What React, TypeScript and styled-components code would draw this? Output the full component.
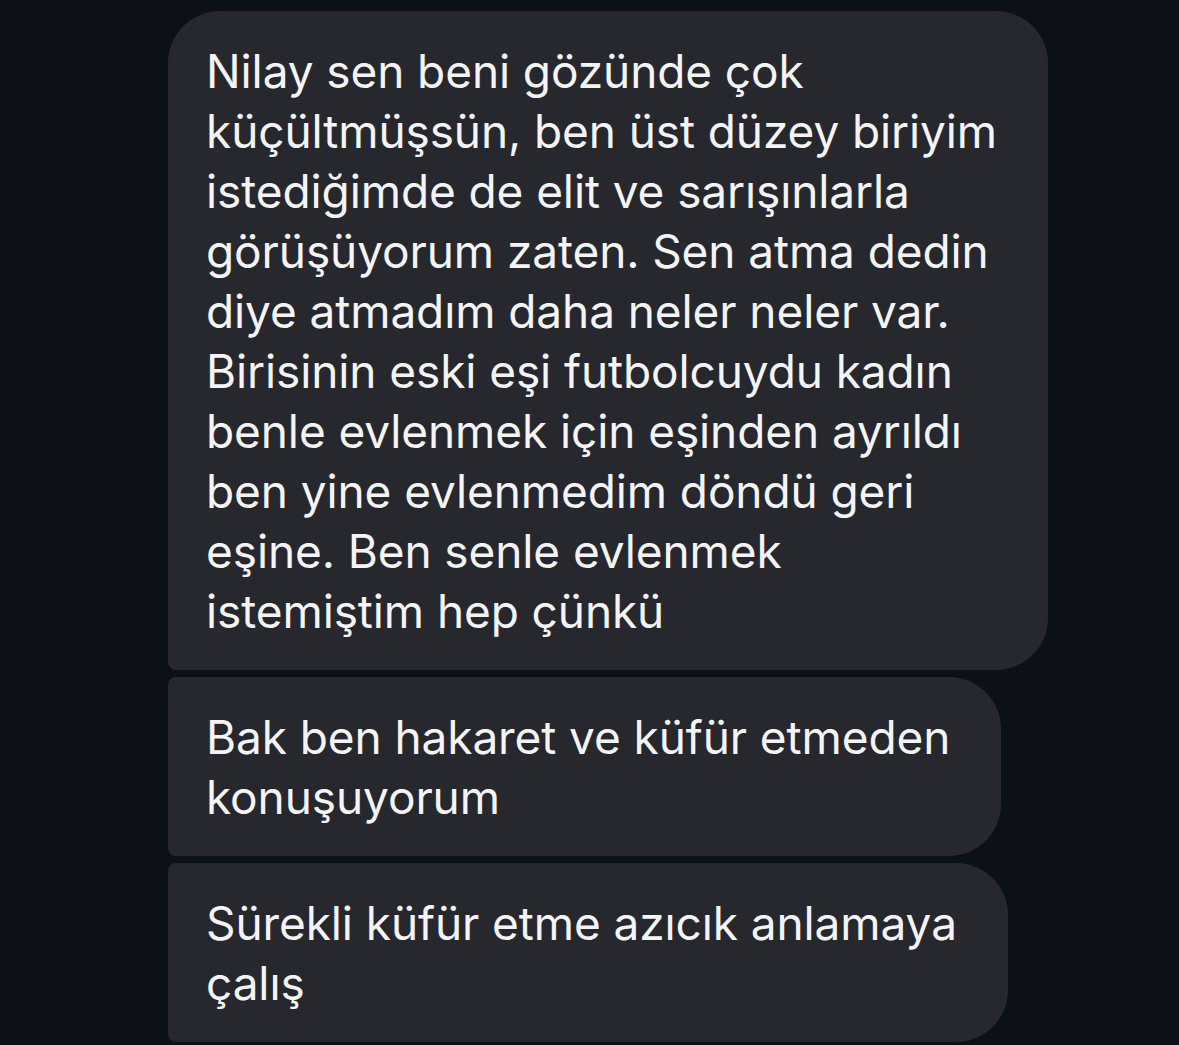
import React from "react";
import styled, {createGlobalStyle} from "styled-components";

const GlobalStyle = createGlobalStyle`
  html, body {
    margin: 0;
    padding: 0;
    background: #0d1015;
  }
  body {
    font-family: Inter, "Noto Sans", "Liberation Sans", sans-serif;
    -webkit-font-smoothing: antialiased;
  }
`;

type Corner = "first" | "middle" | "last";

interface Message {
    id: number;
    lines: string[];
    corner: Corner;
}

const messages: Message[] = [
    {
        id: 1,
        corner: "first",
        lines: [
            "Nilay sen beni gözünde çok",
            "küçültmüşsün, ben üst düzey biriyim",
            "istediğimde de elit ve sarışınlarla",
            "görüşüyorum zaten. Sen atma dedin",
            "diye atmadım daha neler neler var.",
            "Birisinin eski eşi futbolcuydu kadın",
            "benle evlenmek için eşinden ayrıldı",
            "ben yine evlenmedim döndü geri",
            "eşine. Ben senle evlenmek",
            "istemiştim hep çünkü",
        ],
    },
    {
        id: 2,
        corner: "middle",
        lines: ["Bak ben hakaret ve küfür etmeden", "konuşuyorum"],
    },
    {
        id: 3,
        corner: "last",
        lines: ["Sürekli küfür etme azıcık anlamaya", "çalış"],
    },
];

const App: React.FC = () => {
    return (
        <>
            <GlobalStyle/>
            <Thread>
                {messages.map(m => (
                    <Bubble key={m.id} corner={m.corner}>
                        {m.lines.map((line, i) => (
                            <Line key={i}>{line}</Line>
                        ))}
                    </Bubble>
                ))}
            </Thread>
        </>
    );
};

export default App;

const Thread = styled.div`
  display: flex;
  flex-direction: column;
  align-items: flex-start;
  gap: 7px;
  padding: 11px 0 0 168px;
  min-height: 1045px;
  box-sizing: border-box;
`;

const Bubble = styled.div<{ corner: Corner }>`
  background: #26282d;
  color: #f4f4f5;
  padding: 30px 51px 29px 38px;
  border-radius: ${({corner}) =>
    corner === "first" ? "52px 52px 52px 8px" : "8px 52px 52px 8px"};
`;

const Line = styled.div`
  font-size: 46px;
  line-height: 60px;
  letter-spacing: -0.1px;
  white-space: nowrap;
`;
